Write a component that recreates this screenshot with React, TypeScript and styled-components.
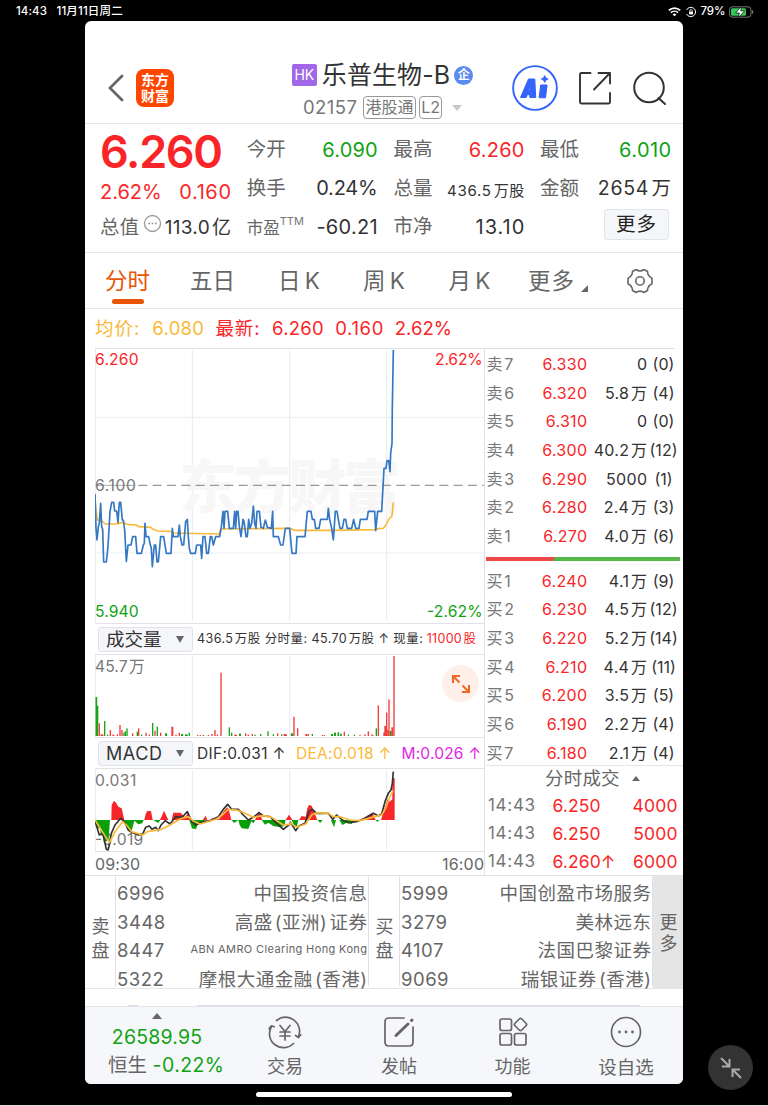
import React from "react";
import styled, { createGlobalStyle } from "styled-components";

const RED = "#fa2528";
const GREEN = "#0fa314";
const DARK = "#333";
const GREY = "#666";
const LINE = "#e6e6ea";
const HAIR = "\u200a";

const Global = createGlobalStyle`
  * { box-sizing: border-box; }
  body { margin: 0; background: #000; font-family: Inter, "Noto Sans CJK SC", sans-serif; }
`;

const Screen = styled.div`
  position: relative;
  width: 768px;
  height: 1106px;
  background: #000;
  border-bottom: 1px solid #dcdcdc;
  overflow: hidden;
  display: flex;
  flex-direction: column;
  align-items: center;
`;

const Text = styled.span<{ s?: number; c?: string; w?: number; ls?: number; ml?: number; mt?: number }>`
  font-size: ${(p) => p.s ?? 20}px;
  line-height: 1;
  color: ${(p) => p.c ?? GREY};
  font-weight: ${(p) => p.w ?? 400};
  letter-spacing: ${(p) => p.ls ?? 0}px;
  margin-right: ${(p) => -(p.ls ?? 0)}px;
  margin-left: ${(p) => p.ml ?? 0}px;
  margin-top: ${(p) => p.mt ?? 0}px;
  white-space: pre;
`;
const Superscript = styled(Text)`
  vertical-align: 9px;
`;

const StatusBar = styled.div`
  width: 100%;
  height: 21px;
  padding: 2px 14px 0 16px;
  display: flex;
  align-items: center;
  svg { flex: none; }
`;
const StatusIcons = styled.div`
  margin-left: auto;
  display: flex;
  align-items: center;
  gap: 3.6px;
`;

const Phone = styled.main`
  width: 598px;
  height: 1063px;
  background: #fff;
  border-radius: 6px;
  overflow: hidden;
  display: flex;
  flex-direction: column;
`;

const Header = styled.header`
  height: 103px;
  border-bottom: 1px solid ${LINE};
  display: grid;
  grid-template-columns: 183px 229px 1fr;
  padding-top: 30px;
`;
const HeaderSide = styled.div<{ pad: number; gap: number }>`
  display: flex;
  align-items: center;
  height: 73px;
  gap: ${(p) => p.gap}px;
  padding-left: ${(p) => p.pad}px;
`;
const Logo = styled.div`
  width: 38px;
  height: 38px;
  border-radius: 8px;
  background: #ff4600;
  color: #fff;
  font-size: 14px;
  line-height: 15.5px;
  font-weight: 700;
  text-align: center;
  padding-top: 3.5px;
`;
const TitleBlock = styled.div`
  display: flex;
  flex-direction: column;
  align-items: center;
  padding-top: 8px;
`;
const TitleRow = styled.div<{ h: number }>`
  height: ${(p) => p.h}px;
  display: flex;
  align-items: center;
`;
const HkBadge = styled.span`
  width: 25px;
  height: 22px;
  border-radius: 2px;
  background: #a067e8;
  color: #fff;
  font-size: 14px;
  line-height: 22px;
  text-align: center;
  margin-right: 5px;
`;
const CorpBadge = styled.span`
  width: 19px;
  height: 19px;
  margin-left: 4px;
  border-radius: 50%;
  background: #5a8bee;
  color: #fff;
  font-size: 12px;
  line-height: 18px;
  font-weight: 700;
  text-align: center;
`;
const Tag = styled.span<{ w: number; ml?: number }>`
  width: ${(p) => p.w}px;
  height: 23px;
  margin-left: ${(p) => p.ml ?? 0}px;
  margin-right: 3px;
  border: 1px solid #999;
  border-radius: 4px;
  color: #777;
  font-size: 16px;
  line-height: 21px;
  text-align: center;
  white-space: nowrap;
`;
const Triangle = styled.i<{ up?: boolean; w: number; h: number; c: string; ml?: number }>`
  margin-left: ${(p) => p.ml ?? 0}px;
  border: ${(p) => p.w / 2}px solid transparent;
  border-top: ${(p) => (p.up ? "0" : `${p.h}px solid ${p.c}`)};
  border-bottom: ${(p) => (p.up ? `${p.h}px solid ${p.c}` : "0")};
`;

const Quote = styled.section`
  height: 129px;
  border-bottom: 1px solid ${LINE};
  display: grid;
  grid-template-columns: 131px 131px 131px 131px;
  column-gap: 15.7px;
  padding: 7px 0 0 15px;
`;
const QuoteColumn = styled.div`
  display: grid;
  grid-template-rows: 38.3px 38.3px 38.3px;
`;
const Pair = styled.div`
  display: flex;
  justify-content: space-between;
  align-items: center;
  svg { margin: -8px 0 0 2px; }
`;
const PriceColumn = styled.div`
  display: grid;
  grid-template-rows: 41px 40px 31px;
`;
const MoreButton = styled.button`
  width: 65px;
  height: 31px;
  margin: -4px 2px 0 auto;
  padding: 0;
  border: 1px solid #e3e5ec;
  border-radius: 3px;
  background: #f5f6fa;
  color: #222;
  font: 19.5px/29px Inter, "Noto Sans CJK SC", sans-serif;
  letter-spacing: 1px;
`;

const Tabs = styled.nav`
  height: 56px;
  border-bottom: 1px solid ${LINE};
  display: grid;
  grid-template-columns: 85px 85px 88px 82px 89px 88px 76px;
`;
const Tab = styled.div<{ active?: boolean }>`
  display: flex;
  flex-direction: column;
  align-items: center;
  padding-top: 16px;
  font-size: 22.5px;
  line-height: 23px;
  color: ${(p) => (p.active ? "#ea5504" : GREY)};
  white-space: nowrap;
  word-spacing: -2px;
  &::after {
    content: "";
    width: 32px;
    height: 5px;
    margin-top: 7px;
    border-radius: 2.5px;
    background: ${(p) => (p.active ? "#ea5504" : "transparent")};
  }
`;
const TabMore = styled.span`
  display: flex;
  align-items: flex-end;
  letter-spacing: 1px;
  svg { margin-left: 6px; }
`;

const Summary = styled.div`
  height: 39px;
  padding-left: 10px;
  display: flex;
  align-items: center;
`;

const Market = styled.section`
  height: 527px;
  padding-left: 10px;
  display: grid;
  grid-template-columns: 389px 199px;
`;
const Charts = styled.div`
  display: flex;
  flex-direction: column;
  svg { display: block; }
`;
const Panel = styled.div<{ h: number }>`
  position: relative;
  height: ${(p) => p.h}px;
  border-top: 1.5px solid #e2e3e9;
  border-bottom: 1.5px solid #e2e3e9;
  border-left: 1px solid #e9ebf0;
  svg { margin: -1.5px 0 0 -1px; }
`;
const IndicatorRow = styled.div<{ nudge?: number }>`
  height: 30px;
  padding: ${(p) => p.nudge ?? 0}px 3px 0;
  display: flex;
  align-items: center;
`;
const Select = styled.div`
  width: 95px;
  height: 25px;
  flex: none;
  margin-right: 4px;
  padding: 0 8px 0 7px;
  border: 1px solid #e0e2ea;
  border-radius: 3px;
  background: #f5f6fa;
  display: flex;
  align-items: center;
  justify-content: space-between;
`;
const Expand = styled.button`
  position: absolute;
  right: 5px;
  top: 10px;
  width: 37px;
  height: 37px;
  padding: 0;
  border: 0;
  border-radius: 50%;
  background: #fef0e8;
  display: grid;
  place-items: center;
  && svg { margin: 0; }
`;
const TimeAxis = styled.div`
  height: 24px;
  display: flex;
  align-items: center;
  justify-content: space-between;
`;

const Book = styled.div`
  border-left: 1.5px solid #dfe0e8;
  padding-top: 1.7px;
  display: flex;
  flex-direction: column;
`;
const BookTop = styled.div`
  height: 1px;
  margin: -1.7px 9px 0.7px 0;
  background: #dcdce0;
`;
const Level = styled.div`
  height: 28.7px;
  flex: none;
  display: grid;
  grid-template-columns: 30px 70.5px 60px 33px;
  align-items: center;
  padding-left: 1.5px;
  & > :nth-child(2), & > :nth-child(3) { justify-self: end; }
  & > :nth-child(4) { justify-self: center; }
`;
const Ratio = styled.div`
  height: 4px;
  margin: 6.3px 3px 5.5px 1px;
  flex: none;
  background: linear-gradient(120deg, #ee4848 0 35%, #55b848 35.3%);
`;
const DealHead = styled.div`
  height: 26px;
  flex: none;
  margin-top: -2px;
  border-top: 1px solid ${LINE};
  display: flex;
  align-items: center;
  padding-left: 60px;
`;
const Deal = styled.div`
  height: 28.3px;
  flex: none;
  display: grid;
  grid-template-columns: 64.5px 64px 61px;
  align-items: center;
  padding-left: 3px;
  & > :last-child { justify-self: end; }
`;

const Brokers = styled.section`
  height: 114px;
  border-top: 1.5px solid #dfe0e8;
  border-bottom: 1px solid ${LINE};
  display: grid;
  grid-template-columns: 30px 254px 30px 254px 30px;
  grid-template-rows: 111.5px;
`;
const Side = styled.div<{ fill?: boolean }>`
  display: flex;
  flex-direction: column;
  justify-content: center;
  align-items: center;
  gap: ${(p) => (p.fill ? 3 : 6)}px;
  padding-top: ${(p) => (p.fill ? 3 : 15)}px;
  padding-left: 1px;
  font-size: 18px;
  line-height: 18px;
  color: ${GREY};
  background: ${(p) => (p.fill ? "#e5e5e5" : "#fff")};
`;
const BrokerList = styled.div`
  border-left: 1px solid #dfe0e8;
  border-right: 1px solid #dfe0e8;
  margin-bottom: 2px;
  padding: 3px 1px 0 1px;
`;
const BrokerRow = styled.div`
  height: 28.5px;
  display: flex;
  justify-content: space-between;
  align-items: center;
`;

const Peek = styled.div`
  height: 17px;
  display: flex;
  align-items: flex-end;
  padding-left: 43px;
  gap: 59px;
`;
const PeekLine = styled.span<{ w: number }>`
  width: ${(p) => p.w}px;
  height: 1.5px;
  background: #dcdde3;
`;
const BottomBar = styled.footer`
  height: 78px;
  border-top: 1px solid #e3e4e9;
  background: #f6f7fa;
  display: grid;
  grid-template-columns: 143px 114px 114px 113px 114px;
`;
const Index = styled.div`
  display: flex;
  flex-direction: column;
  align-items: center;
  padding: 6px 0 0 1px;
`;
const IndexChange = styled.div`
  display: flex;
  align-items: center;
  margin: 8.5px 0 0 18px;
`;
const Action = styled.div`
  display: flex;
  flex-direction: column;
  align-items: center;
  padding-top: 8px;
  gap: 8.5px;
`;
const HomeBar = styled.div`
  width: 256px;
  height: 5px;
  margin-top: 8px;
  border-radius: 3px;
  background: #fff;
`;
const Shrink = styled.button`
  position: absolute;
  left: 708px;
  top: 1045px;
  width: 45px;
  height: 45px;
  padding: 0;
  border: 0;
  border-radius: 50%;
  background: #333;
  display: grid;
  place-items: center;
`;

const sells = [
  ["7", "6.330", "0", "(0)"],
  ["6", "6.320", "5.8 万", "(4)"],
  ["5", "6.310", "0", "(0)"],
  ["4", "6.300", "40.2 万", "(12)"],
  ["3", "6.290", "5000", "(1)"],
  ["2", "6.280", "2.4 万", "(3)"],
  ["1", "6.270", "4.0 万", "(6)"],
];
const buys = [
  ["1", "6.240", "4.1 万", "(9)"],
  ["2", "6.230", "4.5 万", "(12)"],
  ["3", "6.220", "5.2 万", "(14)"],
  ["4", "6.210", "4.4 万", "(11)"],
  ["5", "6.200", "3.5 万", "(5)"],
  ["6", "6.190", "2.2 万", "(4)"],
  ["7", "6.180", "2.1 万", "(4)"],
];
const deals = [
  ["14:43", "6.250", "4000"],
  ["14:43", "6.250", "5000"],
  ["14:43", "6.260↑", "6000"],
];
const sellBrokers = [
  ["6996", "中国投资信息"],
  ["3448", `高盛${HAIR}(亚洲)${HAIR}证券`],
  ["8447", "ABN AMRO Clearing Hong Kong"],
  ["5322", `摩根大通金融${HAIR}(香港)`],
];
const buyBrokers = [
  ["5999", "中国创盈市场服务"],
  ["3279", "美林远东"],
  ["4107", "法国巴黎证券"],
  ["9069", `瑞银证券${HAIR}(香港)`],
];

/* Minute series, in thirds of a pixel; the second half is shifted by HALF. */
const HALF = 585;
const priceA =
  "15,462 18,565 21,600 25,560 28,548 32,490 35,560 38,568 41,666 49,666 54,620 60,515 65,487 71,487 74,513 80,513 84,548 88,487 92,487 97,540 100,540 104,570 109,664 114,615 123,615 128,590 137,590 141,640 154,640 160,615 163,610 165,550 168,590 176,590 181,615 184,625 187,680 193,615 197,615 201,666 205,666 212,590 221,590 229,640 243,640 247,565 250,590 264,590 268,555 271,590 276,615 281,615 287,545 292,538 295,590 298,625 302,640 316,640 320,615 332,615 335,655 339,590 345,590 350,640 355,640 361,590 365,590 370,615 377,590 389,590 394,560 399,514 402,565 405,514 413,514 418,565 430,565 434,514 437,565 440,514 444,514 448,560 453,590 459,538 462,545 468,590 472,590 476,538 480,565 485,550 490,498 494,550 498,565 501,514 508,514 513,562 520,565 526,540 532,562 544,565 548,514 550,590 565,590 572,615 579,615 586,565";
const priceB =
  "0,565 14,565 21,640 33,640 36,590 60,590 67,514 78,514 82,538 88,538 92,565 102,565 107,538 127,538 130,505 134,538 140,565 145,600 151,514 156,514 160,538 165,565 172,565 177,538 182,538 187,565 200,565 206,538 212,565 222,565 226,538 246,538 250,514 269,514 272,572 278,514 290,514 297,385 303,385 306,362 311,362 315,395 317,340 321,310 322,200 325,30";
const avgA =
  "15,475 18,510 22,540 36,543 46,552 80,552 95,548 103,548 110,553 138,555 147,560 182,562 190,568 203,573 243,574 250,579 388,582 392,567 600,565";
const avgB = "15,565 28,571 150,571 270,569 280,566 295,565 303,555 312,537 321,528 325,487";

const R = "#f53b3b";
const G = "#17a417";
type Bar = [number, number, string, number?];
const volA: Bar[] = [
  [19, 231, G, 5], [23, 257, G, 4], [28, 310, R], [36, 343, R, 8], [44, 303, G], [53, 344, G], [61, 330, R], [70, 344, R, 6],
  [82, 343, R], [90, 315, R], [96, 330, R], [102, 338, G], [106, 334, G], [111, 325, G], [128, 340, R], [142, 335, G], [146, 325, R],
  [155, 344, G], [168, 338, R], [178, 344, R], [188, 309, G], [195, 332, R], [202, 320, G], [212, 338, R], [228, 340, G, 6],
  [247, 320, R, 6], [258, 344, R], [268, 338, R], [276, 342, G, 6], [289, 343, G, 8], [298, 338, G], [323, 345, R], [331, 345, R],
  [340, 345, G], [355, 345, R], [366, 342, R], [375, 330, R], [382, 344, R], [393, 158, R, 4], [418, 322, G], [425, 338, G],
  [437, 344, R, 8], [450, 341, G, 6], [467, 340, R], [475, 344, R], [487, 342, R], [495, 344, G], [512, 342, G], [534, 334, G],
  [550, 343, G], [563, 340, R], [575, 343, G], [585, 342, R, 8],
];
const volB: Bar[] = [
  [3, 344, R, 6], [21, 340, G, 7], [27, 290, R], [38, 325, R], [64, 342, R, 6], [70, 342, R], [82, 342, G], [112, 345, R],
  [118, 345, R], [141, 342, G, 6], [150, 338, G, 6], [160, 337, G, 5], [168, 341, G, 5], [178, 335, R], [190, 344, G], [208, 344, G],
  [225, 345, R], [240, 343, R], [250, 334, R], [262, 344, R, 6], [274, 325, G], [280, 256, R], [298, 337, R, 6], [301, 318, R, 6],
  [305, 278, R], [309, 330, R, 5], [312, 238, R], [317, 333, G, 6], [322, 322, R, 6], [327, 108, R, 4],
];

const redA = [
  "64,600 65,555 72,542 78,548 85,560 95,565 103,600",
  "163,600 167,582 172,573 183,573 188,600",
  "210,600 222,572 235,600",
  "245,600 250,578 272,578 285,592 295,578 300,600",
  "338,600 347,587 352,600",
  "360,600 368,594 378,598 388,598 400,575 412,562 418,575 424,600",
  "495,600 507,574 517,600",
  "587,600 597,585 606,600",
];
const greenA = [
  "17,600 20,625 30,625 33,645 44,652 45,665 56,660 57,640 60,600",
  "103,600 112,630 120,635 125,632 133,602 145,613 157,610 161,600",
  "190,600 205,609 211,600",
  "298,600 306,625 318,628 324,610 345,602 350,600",
  "425,600 432,609 445,600 449,615 455,625 475,627 484,604 490,610 496,600",
  "515,600 525,614 535,608 550,618 570,622 583,618 587,600",
];
const redB = [
  "3,600 12,585 22,600",
  "42,600 50,588 62,590 67,565 72,555 80,557 90,582 97,600",
  "225,600 262,578 272,600",
  "288,600 300,560 308,537 314,545 322,538 322,475 329,475 329,600",
];
const greenB = [
  "20,600 28,618 36,618 40,600",
  "97,600 106,609 112,600",
  "138,600 147,622 153,600",
  "163,600 172,615 185,608 200,612 210,600",
  "272,600 277,606 283,600",
];
const difA =
  "15,603 28,645 38,640 44,665 49,688 54,690 58,675 64,640 75,615 92,595 103,605 115,630 125,637 145,645 158,642 167,622 178,618 186,628 197,622 205,632 213,615 226,602 240,612 257,590 270,592 280,588 292,575 305,605 318,615 330,608 345,605 360,602 385,590 400,568 413,553 425,568 445,568 460,585 475,600 490,592 507,578 520,588 540,590 555,605 580,628 600,612";
const difB =
  "15,605 32,632 42,618 60,610 72,575 82,568 95,580 130,580 143,598 155,585 172,600 190,608 215,605 240,595 265,580 280,588 290,582 300,545 310,520 318,510 322,490 325,455";
const deaA =
  "15,600 35,632 58,668 75,635 98,605 112,618 125,635 158,645 172,635 190,632 215,628 240,615 270,597 295,590 310,603 330,612 380,597 400,582 415,568 440,570 465,580 490,592 520,587 545,592 580,615 600,613";
const deaB =
  "15,608 35,622 62,612 80,585 95,578 130,580 145,590 165,590 195,600 225,602 270,590 290,585 302,565 315,530 325,512";

const Grid = ({ top, bottom }: { top: number; bottom: number }) => (
  <g stroke="#e4ebf3" strokeWidth={3}>
    {[307, 599, 890].map((x) => (
      <line key={x} x1={x} x2={x} y1={top} y2={bottom} />
    ))}
  </g>
);
const Bars = ({ data }: { data: Bar[] }) => (
  <>
    {data.map(([x, top, color, w = 4], i) => (
      <rect key={i} x={x - w / 2} y={top} width={w} height={348 - top} fill={color} />
    ))}
  </>
);
const Label = styled.text`
  font-family: Inter, "Noto Sans CJK SC", sans-serif;
  font-size: 47px;
`;

const PriceChart = () => (
  <svg width="389" height="275" viewBox="15 24 1167 825">
    <Grid top={30} bottom={843} />
    <g stroke="#e9edf3" strokeWidth={3}>
      <line x1={15} x2={1182} y1={232} y2={232} />
      <line x1={15} x2={1182} y1={639} y2={639} />
    </g>
    <text x={267} y={503} textLength={666} fontSize={174} fontWeight={900} fill="#f7f7f8" fontFamily='"Noto Sans CJK SC", sans-serif'>
      东方财富
    </text>
    <line x1={145} x2={1182} y1={436} y2={436} stroke="#999" strokeWidth={3.5} strokeDasharray="27 16" />
    <line x1={17} x2={135} y1={436} y2={436} stroke="#aaa" strokeWidth={3} />
    <g fill="none" strokeWidth={5} strokeLinejoin="round">
      <polyline points={avgA} stroke="#fbb938" />
      <polyline points={avgB} stroke="#fbb938" transform={`translate(${HALF})`} />
      <polyline points={priceA} stroke="#3477c3" />
      <polyline points={priceB} stroke="#3477c3" transform={`translate(${HALF})`} />
    </g>
    <Label x={15} y={75} textLength={131} fill={RED}>6.260</Label>
    <Label x={1035} y={75} textLength={143} fill={RED}>2.62%</Label>
    <Label x={15} y={452} textLength={123} fill="#777">6.100</Label>
    <Label x={15} y={832} textLength={131} fill={GREEN}>5.940</Label>
    <Label x={1011} y={832} textLength={167} fill={GREEN}>-2.62%</Label>
  </svg>
);
const VolumeChart = () => (
  <svg width="389" height="83" viewBox="15 102 1167 249">
    <Grid top={108} bottom={348} />
    <Bars data={volA} />
    <g transform={`translate(${HALF})`}>
      <Bars data={volB} />
    </g>
    <Label x={15} y={157} textLength={149} fill="#777">{`45.7${HAIR}万`}</Label>
  </svg>
);
const MacdChart = () => (
  <svg width="389" height="83" viewBox="15 444 1167 249">
    <Grid top={450} bottom={690} />
    <Label x={15} y={499} textLength={124} fill="#777">0.031</Label>
    <Label x={15} y={676} textLength={145} fill="#777">-0.019</Label>
    {redA.map((p) => <polygon key={p} points={p} fill="#f8252a" />)}
    {greenA.map((p) => <polygon key={p} points={p} fill="#08a008" />)}
    <g transform={`translate(${HALF})`}>
      {redB.map((p) => <polygon key={p} points={p} fill="#f8252a" />)}
      {greenB.map((p) => <polygon key={p} points={p} fill="#08a008" />)}
    </g>
    <g fill="none" strokeLinejoin="round">
      <g stroke="#333" strokeWidth={5}>
        <polyline points={difA} />
        <polyline points={difB} transform={`translate(${HALF})`} />
      </g>
      <g stroke="#fbb938" strokeWidth={5}>
        <polyline points={deaA} />
        <polyline points={deaB} transform={`translate(${HALF})`} />
      </g>
    </g>
  </svg>
);

const LevelRow = ({ side, row }: { side: string; row: string[] }) => (
  <Level>
    <Text s={16} ls={0.2} c="#777">{`${side}${HAIR}${row[0]}`}</Text>
    <Text s={16} ls={0.3} c={RED}>{row[1]}</Text>
    <Text s={16} ls={0.3} c={DARK}>{row[2].replace(" ", HAIR)}</Text>
    <Text s={16} c={DARK}>{row[3]}</Text>
  </Level>
);
const BrokerRows = ({ rows }: { rows: string[][] }) => (
  <BrokerList>
    {rows.map(([code, name]) => (
      <BrokerRow key={code}>
        <Text s={18.5} ls={0.5}>{code}</Text>
        {name.startsWith("ABN") ? <Text s={11} ls={0.37} mt={-2}>{name}</Text> : <Text s={18.5} ls={0.5}>{name}</Text>}
      </BrokerRow>
    ))}
  </BrokerList>
);

const iconProps = { fill: "none", stroke: "#666", strokeWidth: 1.7, strokeLinecap: "round", strokeLinejoin: "round" } as const;

export default function App() {
  return (
    <Screen>
      <Global />
      <StatusBar>
        <Text s={11.5} c="#fff" w={500} ls={0.1}>14:43</Text>
        <Text s={11.5} c="#fff" w={500} ml={9.5} ls={0.15}>11月11日周二</Text>
        <StatusIcons>
          <svg width="13" height="10" viewBox="0 0 13 10" fill="none" stroke="#fff" strokeWidth="1.7">
            <path d="M.8 3.4a8.3 8.3 0 0 1 11.4 0M2.9 5.7a5.2 5.2 0 0 1 7.2 0" />
            <path d="M6.5 9.3 4.6 7.4a2.8 2.8 0 0 1 3.8 0z" fill="#fff" stroke="none" />
          </svg>
          <svg width="12" height="12" viewBox="0 0 12 12" fill="none" stroke="#fff">
            <path d="M1.6 4A4.7 4.7 0 1 1 1.6 8" />
            <rect x="4" y="5.6" width="4" height="2.8" fill="#fff" stroke="none" />
            <path d="M4.8 5.8V4.7a1.2 1.2 0 0 1 2.4 0v1.1" strokeWidth=".8" />
          </svg>
          <Text s={11.5} c="#fff" w={500} ls={-0.1}>79%</Text>
          <svg width="25" height="12" viewBox="0 0 25 12">
            <rect x=".5" y=".8" width="21.5" height="10.4" rx="3" fill="none" stroke="#777" />
            <rect x="2" y="2.3" width="15" height="7.4" rx="1.5" fill="#35c759" />
            <path d="M23 4v4q1.4-.6 1.4-2T23 4" fill="#777" />
            <path d="M12.6 0 6.6 7h3.8L9 12l6.600-7.200h-3.900z" fill="#fff" stroke="#000" strokeWidth=".7" />
          </svg>
        </StatusIcons>
      </StatusBar>

      <Phone>
        <Header>
          <HeaderSide pad={23} gap={12}>
            <svg width="16" height="28" viewBox="0 0 16 28" fill="none" stroke="#666" strokeWidth="2.8" strokeLinecap="round">
              <path d="M14 2 2 14 14 26" />
            </svg>
            <Logo>东方<br />财富</Logo>
          </HeaderSide>
          <TitleBlock>
            <TitleRow h={32}>
              <HkBadge>HK</HkBadge>
              <Text s={25} c={DARK} ls={0.1}>乐普生物-B</Text>
              <CorpBadge>企</CorpBadge>
            </TitleRow>
            <TitleRow h={33}>
              <Text s={18.5} c="#777" ls={0.5}>02157</Text>
              <Tag w={53} ml={6}>港股通</Tag>
              <Tag w={23}>L2</Tag>
              <Triangle w={11} h={6} c="#c8c8c8" ml={7} />
            </TitleRow>
          </TitleBlock>
          <HeaderSide pad={14} gap={19}>
            <svg width="48" height="48" viewBox="0 0 48 48">
              <circle cx="24" cy="24" r="21.9" fill="none" stroke="#3365fb" strokeWidth="1.9" />
              <path d="M9.5 33.5 17.5 15h6.3l.9 18.5h-5.9l-.1-2.8h-2.4l-1.1 2.8zM17.6 26.6h1.5v-4.1zM29.7 21h6.4l-1.6 12.8h-6.4z" fill="#3365fb" fillRule="evenodd" stroke="#3365fb" strokeLinejoin="round" />
              <path d="M33.7 11.5q.6 2.9 3.5 3.5-2.9.6-3.5 3.5-.6-2.9-3.5-3.5 2.9-.6 3.5-3.5" fill="#3365fb" stroke="#3365fb" strokeWidth=".8" />
            </svg>
            <svg width="34" height="34" viewBox="0 0 34 34" fill="none" stroke="#333" strokeWidth="1.9" strokeLinecap="round" strokeLinejoin="round">
              <path d="M12.5 2H3.5Q2 2 2 3.5V31Q2 32.5 3.5 32.5H30.5Q32 32.5 32 31V22M20.5 2H32V12.5M32 2 16 18.5" />
            </svg>
            <svg width="36" height="36" viewBox="0 0 36 36" fill="none" stroke="#333" strokeWidth="2" strokeLinecap="round">
              <circle cx="18" cy="17.5" r="14.8" />
              <path d="M27.5 28 34 34" />
            </svg>
          </HeaderSide>
        </Header>

        <Quote>
          <PriceColumn>
            <Pair><Text s={45} c={RED} w={600} ls={-1.3}>6.260</Text></Pair>
            <Pair>
              <Text c={RED}>2.62%</Text>
              <Text c={RED} ls={0.6}>0.160</Text>
            </Pair>
            <Pair>
              <Text s={19.5}>总值</Text>
              <svg width="19" height="19" viewBox="0 0 19 19" fill="none" stroke="#999">
                <circle cx="9.5" cy="9.5" r="8" strokeWidth="1.3" />
                <path d="M5.2 9.5h1.8M8.6 9.5h1.8M12 9.5h1.8" strokeWidth="1.7" />
              </svg>
              <Text s={19} c={DARK} ls={0.3}>{`113.0${HAIR}亿`}</Text>
            </Pair>
          </PriceColumn>
          <QuoteColumn>
            <Pair><Text s={19.5}>今开</Text><Text c={GREEN} ls={0.2}>6.090</Text></Pair>
            <Pair><Text s={19.5}>换手</Text><Text c={DARK} ls={-0.2}>0.24%</Text></Pair>
            <Pair>
              <span><Text s={16.5}>市盈</Text><Superscript s={11} c="#777">TTM</Superscript></span>
              <Text c={DARK} ls={0.3}>-60.21</Text>
            </Pair>
          </QuoteColumn>
          <QuoteColumn>
            <Pair><Text s={19.5}>最高</Text><Text c={RED} ls={0.2}>6.260</Text></Pair>
            <Pair><Text s={19.5}>总量</Text><Text s={15} c={DARK} ls={0.7} mt={5}>{`436.5${HAIR}万股`}</Text></Pair>
            <Pair><Text s={19.5}>市净</Text><Text c={DARK} ls={1}>13.10</Text></Pair>
          </QuoteColumn>
          <QuoteColumn>
            <Pair><Text s={19.5}>最低</Text><Text c={GREEN} ls={0.4}>6.010</Text></Pair>
            <Pair><Text s={19.5}>金额</Text><Text s={19.5} c={DARK} ls={0.7}>{`2654${HAIR}万`}</Text></Pair>
            <Pair><MoreButton>更多</MoreButton></Pair>
          </QuoteColumn>
        </Quote>

        <Tabs>
          <Tab active>分时</Tab>
          <Tab>五日</Tab>
          <Tab>日 K</Tab>
          <Tab>周 K</Tab>
          <Tab>月 K</Tab>
          <Tab>
            <TabMore>
              更多
              <svg width="7" height="7" viewBox="0 0 7 7"><path d="M7 0v7H0z" fill="#666" /></svg>
            </TabMore>
          </Tab>
          <Tab>
            <svg width="28" height="26" viewBox="0 0 28 26" {...iconProps} strokeWidth={1.6}>
              <path d="M10 .5Q14 3.200 18 .5L21.500 2.500Q21.600 7 26 9.200V14.800Q21.600 17 21.500 21.500L18 23.500Q14 20.800 10 23.500L6.500 21.500Q6.400 17 2 14.800V9.200Q6.400 7 6.500 2.500Z" />
              <circle cx="14" cy="12" r="4.2" />
            </svg>
          </Tab>
        </Tabs>

        <Summary>
          <Text s={18.5} c="#fbb938" ls={1}>均价:</Text>
          <Text s={18.5} c="#fbb938" ml={13} ls={0.3}>6.080</Text>
          <Text s={18.5} c={RED} ml={11.5} ls={0.8}>最新:</Text>
          <Text s={18.5} c={RED} ml={12.5} ls={0.3}>6.260</Text>
          <Text s={18.5} c={RED} ml={11.5} ls={0.6}>0.160</Text>
          <Text s={18.5} c={RED} ml={11.5} ls={0}>2.62%</Text>
        </Summary>

        <Market>
          <Charts>
            <Panel h={276}><PriceChart /></Panel>
            <IndicatorRow>
              <Select>
                <Text s={18.5} c={DARK}>成交量</Text>
                <Triangle w={8} h={7} c="#666" />
              </Select>
              <Text s={12.5} c={DARK} ls={0.43}>{`436.5${HAIR}万股 分时量: 45.70${HAIR}万股 ↑ 现量: `}</Text>
              <Text s={12.5} c={RED} ls={0.3}>{`11000${HAIR}股`}</Text>
            </IndicatorRow>
            <Panel h={84}>
              <VolumeChart />
              <Expand>
                <svg width="20" height="20" viewBox="0 0 20 20" fill="none" stroke="#ee6a24" strokeWidth="2">
                  <path d="M2 9V2H9M2 2 8.5 8.5M18 11V18H11M18 18 11.5 11.5" />
                </svg>
              </Expand>
            </Panel>
            <IndicatorRow nudge={1}>
              <Select>
                <Text s={18} c={DARK} ls={0.6}>MACD</Text>
                <Triangle w={8} h={7} c="#666" />
              </Select>
              <Text s={15.5} c={DARK} ls={0.3}>DIF:0.031 ↑</Text>
              <Text s={15.5} c="#fbb938" ml={10.5} ls={0.35}>DEA:0.018 ↑</Text>
              <Text s={15.5} c="#e326e3" ml={10} ls={0.2}>M:0.026 ↑</Text>
            </IndicatorRow>
            <Panel h={84}><MacdChart /></Panel>
            <TimeAxis>
              <Text s={16} ls={0.1}>09:30</Text>
              <Text s={16} ls={0.2}>16:00</Text>
            </TimeAxis>
          </Charts>
          <Book>
            <BookTop />
            {sells.map((r) => <LevelRow key={r[0]} side="卖" row={r} />)}
            <Ratio />
            {buys.map((r) => <LevelRow key={r[0]} side="买" row={r} />)}
            <DealHead>
              <Text s={18.5} ls={0.2}>分时成交</Text>
              <Triangle up w={8} h={5} c="#666" ml={12} />
            </DealHead>
            {deals.map(([t, p, v], i) => (
              <Deal key={i}>
                <Text s={17} ls={0.7} c="#777">{t}</Text>
                <Text s={17.5} ls={0.1} c={RED}>{p}</Text>
                <Text s={17.5} ls={0.2} c={RED}>{v}</Text>
              </Deal>
            ))}
          </Book>
        </Market>

        <Brokers>
          <Side><span>卖</span><span>盘</span></Side>
          <BrokerRows rows={sellBrokers} />
          <Side><span>买</span><span>盘</span></Side>
          <BrokerRows rows={buyBrokers} />
          <Side fill><span>更</span><span>多</span></Side>
        </Brokers>
        <Peek><PeekLine w={10} /><PeekLine w={443} /></Peek>

        <BottomBar>
          <Index>
            <Triangle up w={11} h={6} c="#666" />
            <Text s={19.5} c={GREEN} ls={0.2} mt={9}>26589.95</Text>
            <IndexChange>
              <Text s={19.5}>恒生 </Text>
              <Text s={19.5} c={GREEN} ls={0.4}>-0.22%</Text>
            </IndexChange>
          </Index>
          <Action>
            <svg width="34" height="34" viewBox="0 0 34 34" {...iconProps}>
              <path d="M8.5 5.5A14 14 0 0 1 30.5 21.5M27.5 20.5 30.5 22.5 32.8 19.8M25.5 28.5A14 14 0 0 1 3.5 11.5M1.2 13.5 3.5 10.8 6.2 11.8" />
              <path d="M12 10.5 17 16.5 22 10.5M17 16.5V25M12 17H22M12 21H22" />
            </svg>
            <Text s={18}>交易</Text>
          </Action>
          <Action>
            <svg width="34" height="34" viewBox="0 0 34 34" {...iconProps}>
              <path d="M22 3H7Q3 3 3 7V27Q3 31 7 31H27Q31 31 31 27V12" />
              <path d="M14 20.5 26 9M29.5 5.5 30 5" strokeWidth="3" />
            </svg>
            <Text s={18}>发帖</Text>
          </Action>
          <Action>
            <svg width="34" height="34" viewBox="0 0 34 34" {...iconProps}>
              <rect x="4" y="4" width="11.5" height="11.5" rx="2" />
              <rect x="4" y="18.5" width="11.5" height="11.5" rx="2" />
              <rect x="18.5" y="18.5" width="11.5" height="11.5" rx="2" />
              <rect x="19.7" y="4.7" width="9.6" height="9.6" rx="1.8" transform="rotate(45 24.5 9.5)" />
            </svg>
            <Text s={18}>功能</Text>
          </Action>
          <Action>
            <svg width="34" height="34" viewBox="0 0 34 34" {...iconProps}>
              <circle cx="17" cy="17" r="14.5" />
              <path d="M10.5 17h.01M17 17h.01M23.5 17h.01" strokeWidth="2.8" />
            </svg>
            <Text s={18.5}>设自选</Text>
          </Action>
        </BottomBar>
      </Phone>

      <HomeBar />
      <Shrink>
        <svg width="22" height="22" viewBox="0 0 22 22" fill="none" stroke="#aaa" strokeWidth="2">
          <path d="M1 1 9 9M9.5 2V9.5H2M21 21 13 13M12.5 20V12.5H20" />
        </svg>
      </Shrink>
    </Screen>
  );
}
